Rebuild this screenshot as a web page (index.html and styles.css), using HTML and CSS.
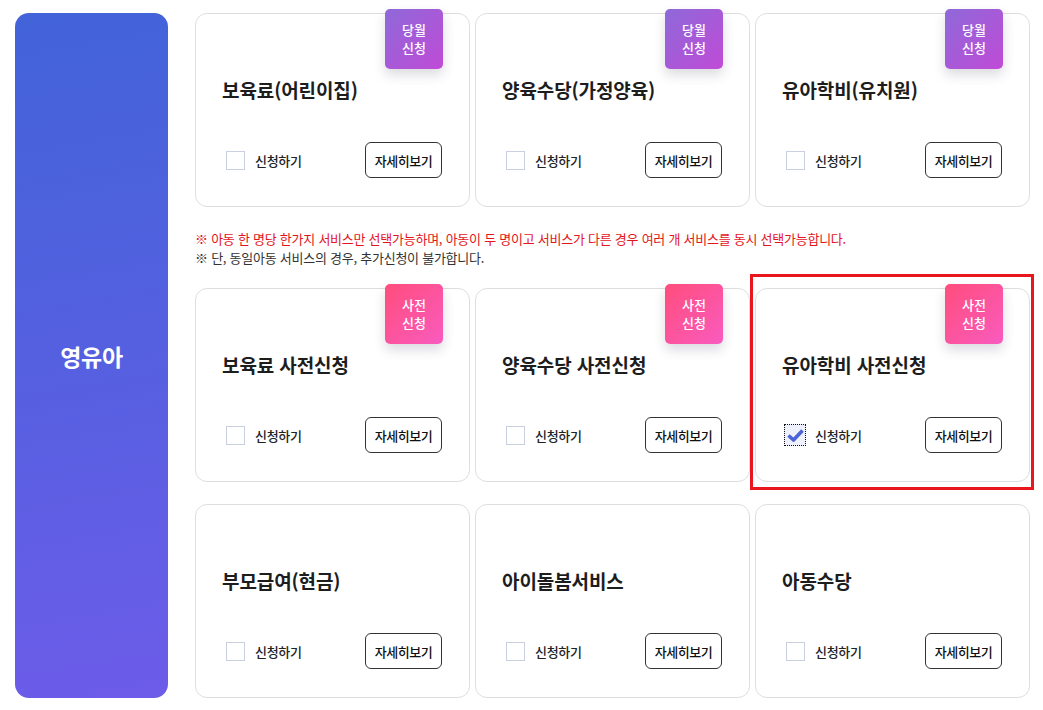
FILE: index.html
```html
<!DOCTYPE html>
<html lang="ko">
<head>
<meta charset="utf-8">
<link rel="stylesheet" href="styles.css">
</head>
<body>
<div class="page">
  <aside class="side"><span>영유아</span></aside>
  <main class="main">
    <div class="grid">
      <div class="card">
        <span class="badge badge-month">당월<br>신청</span>
        <h3 class="title">보육료(어린이집)</h3>
        <div class="foot">
          <label class="check"><span class="box"></span><span>신청하기</span></label>
          <button class="more">자세히보기</button>
        </div>
      </div>
      <div class="card">
        <span class="badge badge-month">당월<br>신청</span>
        <h3 class="title">양육수당(가정양육)</h3>
        <div class="foot">
          <label class="check"><span class="box"></span><span>신청하기</span></label>
          <button class="more">자세히보기</button>
        </div>
      </div>
      <div class="card">
        <span class="badge badge-month">당월<br>신청</span>
        <h3 class="title">유아학비(유치원)</h3>
        <div class="foot">
          <label class="check"><span class="box"></span><span>신청하기</span></label>
          <button class="more">자세히보기</button>
        </div>
      </div>
    </div>
    <div class="notice">
      <p class="red">※ 아동 한 명당 한가지 서비스만 선택가능하며, 아동이 두 명이고 서비스가 다른 경우 여러 개 서비스를 동시 선택가능합니다.</p>
      <p>※ 단, 동일아동 서비스의 경우, 추가신청이 불가합니다.</p>
    </div>
    <div class="grid">
      <div class="card">
        <span class="badge badge-pre">사전<br>신청</span>
        <h3 class="title">보육료 사전신청</h3>
        <div class="foot">
          <label class="check"><span class="box"></span><span>신청하기</span></label>
          <button class="more">자세히보기</button>
        </div>
      </div>
      <div class="card">
        <span class="badge badge-pre">사전<br>신청</span>
        <h3 class="title">양육수당 사전신청</h3>
        <div class="foot">
          <label class="check"><span class="box"></span><span>신청하기</span></label>
          <button class="more">자세히보기</button>
        </div>
      </div>
      <div class="card">
        <span class="highlight"></span>
        <span class="badge badge-pre">사전<br>신청</span>
        <h3 class="title">유아학비 사전신청</h3>
        <div class="foot">
          <label class="check"><span class="box checked"><svg viewBox="0 0 20 20" width="20" height="20"><path d="M3.5 10.5 L8.5 15 L17.5 5.5" fill="none" stroke="#4c62d8" stroke-width="3.6" stroke-linejoin="round"/></svg></span><span>신청하기</span></label>
          <button class="more">자세히보기</button>
        </div>
      </div>
    </div>
    <div class="grid row3">
      <div class="card">
        <h3 class="title">부모급여(현금)</h3>
        <div class="foot">
          <label class="check"><span class="box"></span><span>신청하기</span></label>
          <button class="more">자세히보기</button>
        </div>
      </div>
      <div class="card">
        <h3 class="title">아이돌봄서비스</h3>
        <div class="foot">
          <label class="check"><span class="box"></span><span>신청하기</span></label>
          <button class="more">자세히보기</button>
        </div>
      </div>
      <div class="card">
        <h3 class="title">아동수당</h3>
        <div class="foot">
          <label class="check"><span class="box"></span><span>신청하기</span></label>
          <button class="more">자세히보기</button>
        </div>
      </div>
    </div>
  </main>
</div>
</body>
</html>
```

FILE: styles.css
```css
* { box-sizing: border-box; }
html, body { margin: 0; padding: 0; background: #fff; }
body {
  font-family: "Noto Sans CJK KR", "Noto Sans", sans-serif;
  color: #222;
}
.page {
  display: flex;
  padding: 13px 14px 12px 15px;
  gap: 27px;
}
.side {
  width: 153px;
  flex: none;
  border-radius: 14px;
  background: linear-gradient(170deg, #4263d9 0%, #5560e0 50%, #6d5ce9 100%);
  display: flex;
  align-items: center;
  justify-content: center;
  color: #fff;
  font-size: 23px;
  font-weight: 700;
  letter-spacing: -0.3px;
}
.main { flex: 1; display: flex; flex-direction: column; }
.grid {
  display: grid;
  grid-template-columns: 275px 275px 275px;
  column-gap: 5px;
}
.row3 { margin-top: 22px; }
.card {
  position: relative;
  height: 194px;
  border: 1px solid #dedede;
  border-radius: 12px;
  padding: 63px 27px 0 26px;
  background: #fff;
}
.badge {
  position: absolute;
  top: -5px;
  right: 26px;
  width: 58px;
  height: 60px;
  border-radius: 5px;
  color: #fff;
  font-size: 13px;
  line-height: 18px;
  font-weight: 500;
  display: flex;
  align-items: center;
  justify-content: center;
  text-align: center;
  box-shadow: 0 6px 12px rgba(60, 60, 90, 0.18);
}
.badge-month { background: linear-gradient(135deg, #8e69d9 0%, #c04bd6 100%); }
.badge-pre { background: linear-gradient(135deg, #ff4d7c 0%, #f95bbf 100%); }
.title {
  margin: 0;
  font-size: 19px;
  line-height: 26px;
  font-weight: 700;
  letter-spacing: -0.1px;
  color: #1d1d1d;
}
.foot {
  margin-top: 39px;
  display: flex;
  align-items: center;
  justify-content: space-between;
  padding-left: 4px;
}
.check {
  display: flex;
  align-items: center;
  gap: 10px;
  font-size: 13px;
  font-weight: 500;
  color: #222;
  letter-spacing: -0.3px;
}
.box {
  width: 19px;
  height: 19px;
  border: 1px solid #c9d1e1;
  background: #fff;
  display: flex;
  align-items: center;
  justify-content: center;
}
.box.checked {
  width: 22px;
  height: 22px;
  margin: -2px -1px -2px -2px;
  border: 1px dotted #111;
  background: #eef1fb;
}
.more {
  width: 77px;
  height: 36px;
  border: 1px solid #333;
  border-radius: 6px;
  background: #fff;
  font-family: inherit;
  font-size: 13px;
  font-weight: 500;
  color: #111;
  letter-spacing: -0.5px;
  padding: 0;
}
.notice {
  height: 81px;
  padding-top: 22px;
  font-size: 13px;
  line-height: 19px;
  letter-spacing: -0.25px;
  color: #333;
}
.notice p { margin: 0; }
.notice .red { color: #e3141c; }
.highlight {
  position: absolute;
  left: -6px;
  top: -15px;
  right: -5px;
  bottom: -9px;
  border: 3px solid #e8161d;
  pointer-events: none;
}
```
